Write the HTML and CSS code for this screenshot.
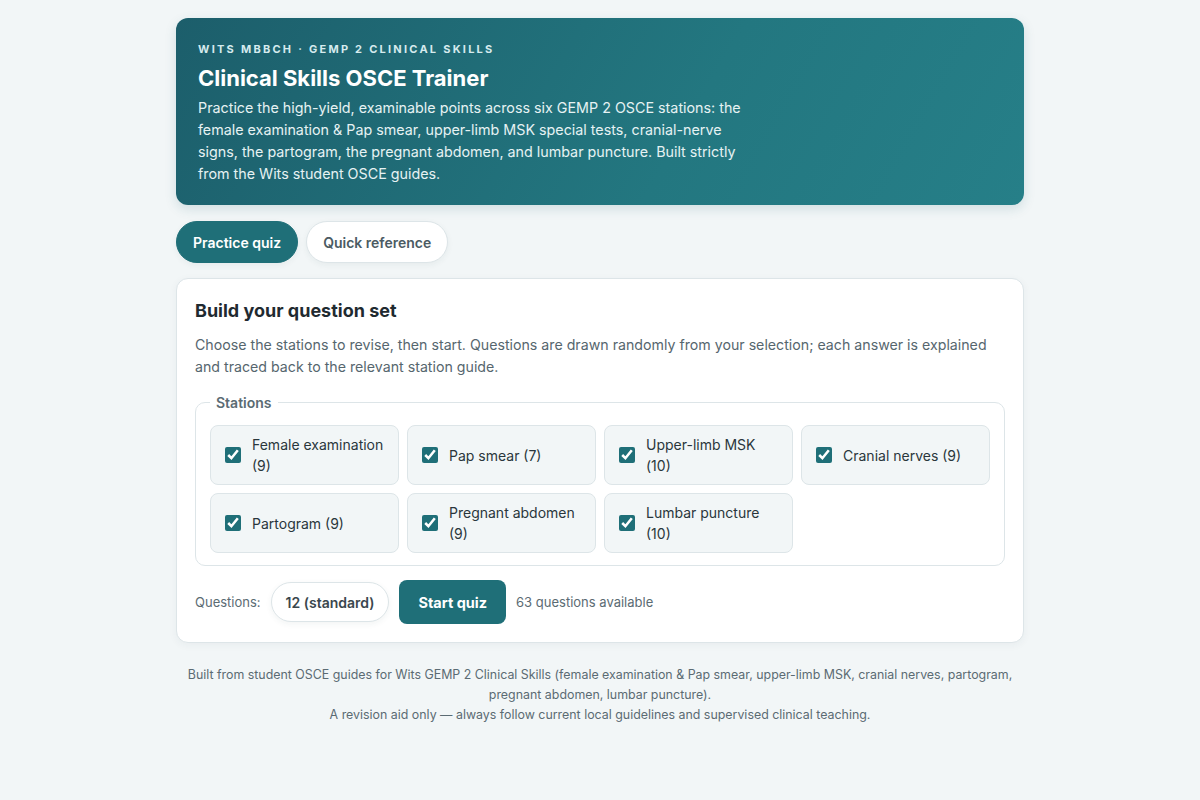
FILE: index.html
```
<!DOCTYPE html>
<html lang="en">
<head>
  <meta charset="UTF-8" />
  <meta name="viewport" content="width=device-width, initial-scale=1" />
  <title>Clinical Skills OSCE Trainer</title>
  <link rel="stylesheet" href="styles.css">
</head>
<body>
  <div class="container">
    <header class="hero">
      <p class="eyebrow">Wits MBBCh · GEMP 2 Clinical Skills</p>
      <h1>Clinical Skills OSCE Trainer</h1>
      <p class="lead">Practice the high-yield, examinable points across six GEMP 2 OSCE stations: the female examination &amp; Pap smear, upper-limb MSK special tests, cranial-nerve signs, the partogram, the pregnant abdomen, and lumbar puncture. Built strictly from the Wits student OSCE guides.</p>
    </header>

    <nav class="tabs">
      <button class="tab active">Practice quiz</button>
      <button class="tab">Quick reference</button>
    </nav>

    <section class="card">
      <h2>Build your question set</h2>
      <p class="intro">Choose the stations to revise, then start. Questions are drawn randomly from your selection; each answer is explained and traced back to the relevant station guide.</p>

      <fieldset class="stations">
        <legend>Stations</legend>
        <div class="station-grid">
          <label class="station"><input type="checkbox" checked /><span>Female examination (9)</span></label>
          <label class="station"><input type="checkbox" checked /><span>Pap smear (7)</span></label>
          <label class="station"><input type="checkbox" checked /><span>Upper-limb MSK (10)</span></label>
          <label class="station"><input type="checkbox" checked /><span>Cranial nerves (9)</span></label>
          <label class="station"><input type="checkbox" checked /><span>Partogram (9)</span></label>
          <label class="station"><input type="checkbox" checked /><span>Pregnant abdomen (9)</span></label>
          <label class="station"><input type="checkbox" checked /><span>Lumbar puncture (10)</span></label>
        </div>
      </fieldset>

      <div class="controls">
        <span class="muted">Questions:</span>
        <button class="select">12 (standard)</button>
        <button class="start">Start quiz</button>
        <span class="muted">63 questions available</span>
      </div>
    </section>

    <footer class="foot">
      <p>Built from student OSCE guides for Wits GEMP 2 Clinical Skills (female examination &amp; Pap smear, upper-limb MSK, cranial nerves, partogram, pregnant abdomen, lumbar puncture).</p>
      <p>A revision aid only — always follow current local guidelines and supervised clinical teaching.</p>
    </footer>
  </div>
</body>
</html>
```

FILE: styles.css
```
* {
  box-sizing: border-box;
  margin: 0;
  padding: 0;
}

body {
  font-family: Inter, "Liberation Sans", sans-serif;
  background-color: #f2f6f7;
  color: #1f2a30;
  padding: 18px 0 40px;
}

.container {
  width: 848px;
  margin: 0 auto;
}

.hero {
  background: linear-gradient(120deg, #1c5e6b 0%, #237780 60%, #267f88 100%);
  color: #ffffff;
  border-radius: 12px;
  padding: 24px 22px 20px;
  box-shadow: 0 4px 12px rgba(28, 94, 107, 0.15);
}

.eyebrow {
  font-size: 11px;
  font-weight: 700;
  letter-spacing: 2.25px;
  text-transform: uppercase;
  color: #d6ebee;
  line-height: 14px;
}

.hero h1 {
  font-size: 22px;
  font-weight: 700;
  line-height: 28px;
  margin-top: 8px;
}

.lead {
  font-size: 14.3px;
  line-height: 22px;
  max-width: 560px;
  margin-top: 5px;
  color: #e6f2f3;
}

.tabs {
  display: flex;
  gap: 8px;
  margin-top: 16px;
}

.tab {
  font-family: inherit;
  font-size: 14px;
  font-weight: 600;
  height: 42px;
  padding: 0 16px;
  border-radius: 21px;
  border: 1px solid #dde5e8;
  background-color: #ffffff;
  color: #4b5b63;
  box-shadow: 0 2px 6px rgba(30, 60, 70, 0.06);
  cursor: pointer;
}

.tab.active {
  background-color: #1f6f78;
  border-color: #1f6f78;
  color: #ffffff;
}

.card {
  margin-top: 15px;
  background-color: #ffffff;
  border: 1px solid #dde5e8;
  border-radius: 12px;
  padding: 20px 18px 18px;
  box-shadow: 0 2px 8px rgba(30, 60, 70, 0.05);
}

.card h2 {
  font-size: 18px;
  font-weight: 700;
  line-height: 24px;
  color: #1f2a30;
}

.intro {
  font-size: 14.2px;
  line-height: 22px;
  color: #56666e;
  margin-top: 11px;
}

.stations {
  margin-top: 16px;
  border: 1px solid #dde5e8;
  border-radius: 10px;
  padding: 14px 14px 12px;
}

.stations legend {
  font-size: 14px;
  font-weight: 600;
  color: #5b6b73;
  padding: 0 6px;
}

.station-grid {
  display: grid;
  grid-template-columns: repeat(4, 189px);
  gap: 8px;
}

.station {
  display: flex;
  align-items: center;
  gap: 11px;
  min-height: 60px;
  padding: 8px 14px;
  background-color: #f2f6f7;
  border: 1px solid #dde5e8;
  border-radius: 8px;
  font-size: 14px;
  line-height: 21px;
  color: #2a363c;
  cursor: pointer;
}

.station input {
  width: 16px;
  height: 16px;
  flex: none;
  accent-color: #1f6f78;
}

.controls {
  display: flex;
  align-items: center;
  gap: 10px;
  margin-top: 14px;
}

.muted {
  font-size: 13px;
  color: #5b6b73;
}

.select {
  font-family: inherit;
  font-size: 14px;
  font-weight: 600;
  color: #3a474d;
  height: 40px;
  padding: 0 14px;
  border: 1px solid #dde5e8;
  border-radius: 20px;
  background-color: #ffffff;
  box-shadow: 0 2px 6px rgba(30, 60, 70, 0.06);
}

.start {
  font-family: inherit;
  font-size: 14.5px;
  font-weight: 700;
  color: #ffffff;
  height: 44px;
  padding: 0 19px;
  border: none;
  border-radius: 8px;
  background-color: #1f6f78;
  cursor: pointer;
}

.foot {
  margin-top: 22px;
  text-align: center;
  font-size: 12.4px;
  line-height: 20px;
  color: #5b6b73;
}
```
